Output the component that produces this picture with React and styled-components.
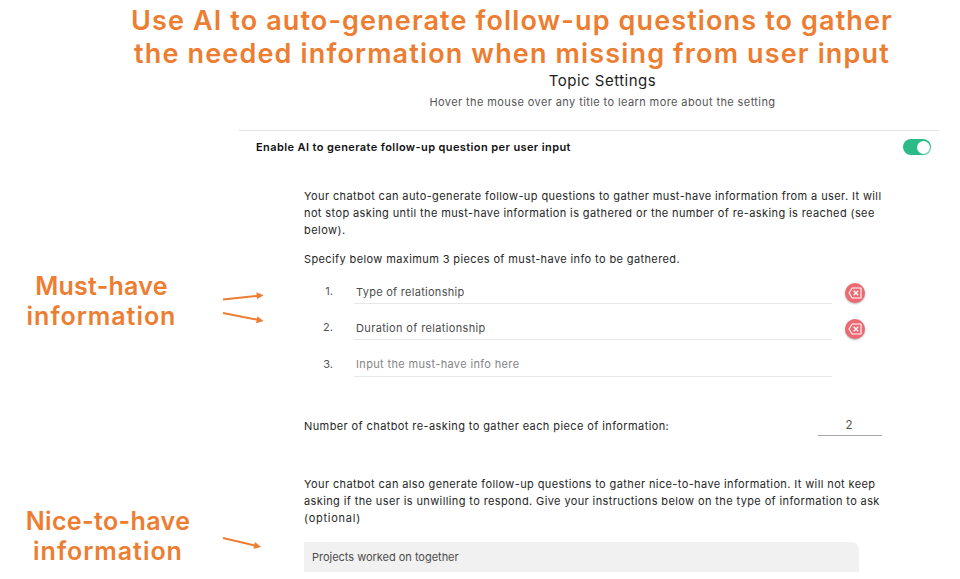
import React from "react";
import styled, { createGlobalStyle } from "styled-components";

const GlobalStyle = createGlobalStyle`
  body { margin: 0; background: #fff; }
  * { box-sizing: border-box; }
`;

const Page = styled.main`
  display: flex;
  flex-direction: column;
  width: 960px;
  height: 579px;
  overflow: hidden;
  background: #fff;
  font-family: Inter, "Open Sans", sans-serif;
  color: #262626;
`;

const Line = styled.span`
  display: block;
  white-space: nowrap;
  letter-spacing: ${(p) => p.$track ?? 0.385}px;
`;

const Headline = styled.h1`
  margin: 0;
  padding: 4px 0 0 64px;
  height: 70px;
  font-size: 27px;
  line-height: 33px;
  font-weight: 600;
  text-align: center;
  color: #ed7d31;
`;

const Body = styled.div`
  display: flex;
  height: 509px;
`;

const Aside = styled.aside`
  display: flex;
  flex: none;
  flex-direction: column;
  width: 239px;
  padding-top: 200px;
`;

const Callout = styled.div`
  display: flex;
  height: ${(p) => p.$height}px;
`;

const CalloutLabel = styled.h2`
  flex: none;
  margin: 1px 0 0;
  width: ${(p) => p.$width}px;
  font-size: 25px;
  line-height: 30px;
  font-weight: 600;
  text-align: center;
  color: #ed7d31;
`;

const Arrows = styled.svg`
  flex: none;
  width: 44px;
  height: 60px;
  margin-left: ${(p) => p.$gap}px;
  overflow: visible;
  stroke: #ed7d31;
  fill: #ed7d31;
`;

const Panel = styled.section`
  display: flex;
  flex-direction: column;
  width: 700px;
`;

const PanelHeader = styled.header`
  height: 61px;
  padding: 1px 0 0 27px;
  border-bottom: 1px solid #e2e2e2;
  text-align: center;
`;

const Title = styled.h3`
  margin: 0;
  font-size: 15px;
  line-height: 19px;
  font-weight: 400;
  color: #1d1d1d;
`;

const Subtitle = styled.p`
  margin: 4px 0 0;
  font-size: 11px;
  line-height: 17px;
  color: #555;
`;

const ToggleRow = styled.div`
  display: flex;
  align-items: center;
  justify-content: space-between;
  height: 33px;
  padding: 0 8px 0 17px;
  font-size: 11px;
  line-height: 17px;
  font-weight: 600;
  color: #111;
`;

const Toggle = styled.button`
  display: flex;
  justify-content: flex-end;
  align-items: center;
  width: 28px;
  height: 16px;
  margin-bottom: 1px;
  padding: 0 1px;
  border: 0;
  border-radius: 8px;
  background: #2abb88;
`;

const Knob = styled.span`
  width: 13px;
  height: 13px;
  border-radius: 50%;
  background: #fff;
`;

const Settings = styled.div`
  display: flex;
  flex-direction: column;
  padding: 24px 0 0 65px;
`;

const Paragraph = styled.p`
  margin: 0 0 ${(p) => p.$after}px;
  font-size: 11px;
  line-height: 17px;
`;

const List = styled.ol`
  display: grid;
  grid-auto-rows: 36.4px;
  margin: 0 0 34px;
  padding: 0;
  list-style: none;
`;

const Item = styled.li`
  display: grid;
  grid-template-columns: 50px 478px 20px;
  align-items: start;
`;

const Index = styled.span`
  padding: 8px 21px 0 0;
  text-align: right;
  font-size: 11px;
  line-height: 17px;
  color: #555;
`;

const Field = styled.div`
  height: 29px;
  padding: ${(p) => (p.$empty ? 8 : 9)}px 0 0 2px;
  border-bottom: 1px solid #e8e8e8;
  font-size: 11px;
  line-height: 17px;
  color: ${(p) => (p.$empty ? "#858585" : "#4c4c4c")};
`;

const RemoveButton = styled.button`
  display: grid;
  place-items: center;
  width: 20px;
  height: 20px;
  margin: 8px 0 0 13px;
  padding: 0;
  border: 0;
  border-radius: 50%;
  background: #ec6872;
  box-shadow: 0 1px 2px rgba(0, 0, 0, 0.3);
`;

const CountRow = styled.div`
  display: flex;
  justify-content: space-between;
  width: 578px;
  height: 19px;
  margin-bottom: 39px;
  font-size: 11px;
  line-height: 17px;
`;

const Count = styled.div`
  width: 64px;
  height: 19px;
  margin-top: -1px;
  padding-right: 2px;
  border-bottom: 1px solid #a8a8a8;
  text-align: center;
  font-size: 11.5px;
  color: #555;
`;

const Instructions = styled.div`
  width: 555px;
  height: 30px;
  padding: 7px 8px;
  border-radius: 0 8px 0 0;
  background: #f1f1f1;
  font-size: 11px;
  line-height: 17px;
  color: #4c4c4c;
`;

function BackspaceIcon() {
  return (
    <svg width="14" height="12" viewBox="0 0 14 12" fill="none" stroke="#fff" strokeWidth="1.1">
      <path d="M4.2 1H13V11H4.2L1 6Z" strokeLinejoin="round" />
      <path d="M5.7 3.7L10.2 8.3M10.2 3.7L5.7 8.3" strokeWidth="1.3" />
    </svg>
  );
}

const items = [
  { text: "Type of relationship", track: 0.28 },
  { text: "Duration of relationship", track: 0.35 },
  { text: "Input the must-have info here", track: 0.35, empty: true },
];

export default function App() {
  return (
    <Page>
      <GlobalStyle />
      <Headline>
        <Line $track={1.12}>Use AI to auto-generate follow-up questions to gather</Line>
        <Line $track={1.15}>the needed information when missing from user input</Line>
      </Headline>
      <Body>
        <Aside>
          <Callout $height={235}>
            <CalloutLabel $width={203}>
              <Line $track={0.25}>Must-have</Line>
              <Line $track={0.97}>information</Line>
            </CalloutLabel>
            <Arrows $gap={20} viewBox="0 0 44 60">
              <path d="M0 29.5L36 25.7M0 43L36 50" strokeWidth="2" fill="none" />
              <path d="M33.5 22.2L40.5 25.2L34 29.3ZM34.4 46.2L40.5 51L33.1 53.2Z" stroke="none" />
            </Arrows>
          </Callout>
          <Callout $height={60}>
            <CalloutLabel $width={216}>
              <Line $track={0.38}>Nice-to-have</Line>
              <Line $track={0.97}>information</Line>
            </CalloutLabel>
            <Arrows $gap={7} viewBox="0 0 44 60">
              <path d="M0 33L33 40.7" strokeWidth="2" fill="none" />
              <path d="M32 37L38 42L30.4 43.8Z" stroke="none" />
            </Arrows>
          </Callout>
        </Aside>
        <Panel>
          <PanelHeader>
            <Title><Line $track={0.49}>Topic Settings</Line></Title>
            <Subtitle>
              <Line $track={0.4}>Hover the mouse over any title to learn more about the setting</Line>
            </Subtitle>
          </PanelHeader>
          <ToggleRow>
            <Line $track={0.4}>Enable AI to generate follow-up question per user input</Line>
            <Toggle role="switch" aria-checked="true"><Knob /></Toggle>
          </ToggleRow>
          <Settings>
            <Paragraph $after={12}>
              <Line $track={0.39}>Your chatbot can auto-generate follow-up questions to gather must-have information from a user. It will</Line>
              <Line>not stop asking until the must-have information is gathered or the number of re-asking is reached (see</Line>
              <Line $track={0.46}>below).</Line>
            </Paragraph>
            <Paragraph $after={7}>
              <Line>Specify below maximum 3 pieces of must-have info to be gathered.</Line>
            </Paragraph>
            <List>
              {items.map((item, i) => (
                <Item key={item.text}>
                  <Index>{i + 1}.</Index>
                  <Field $empty={item.empty}><Line $track={item.track}>{item.text}</Line></Field>
                  {!item.empty && <RemoveButton aria-label="Remove"><BackspaceIcon /></RemoveButton>}
                </Item>
              ))}
            </List>
            <CountRow>
              <Line $track={0.4}>Number of chatbot re-asking to gather each piece of information:</Line>
              <Count>2</Count>
            </CountRow>
            <Paragraph $after={15}>
              <Line>Your chatbot can also generate follow-up questions to gather nice-to-have information. It will not keep</Line>
              <Line>asking if the user is unwilling to respond. Give your instructions below on the type of information to ask</Line>
              <Line $track={0.75}>(optional)</Line>
            </Paragraph>
            <Instructions><Line $track={-0.02}>Projects worked on together</Line></Instructions>
          </Settings>
        </Panel>
      </Body>
    </Page>
  );
}
